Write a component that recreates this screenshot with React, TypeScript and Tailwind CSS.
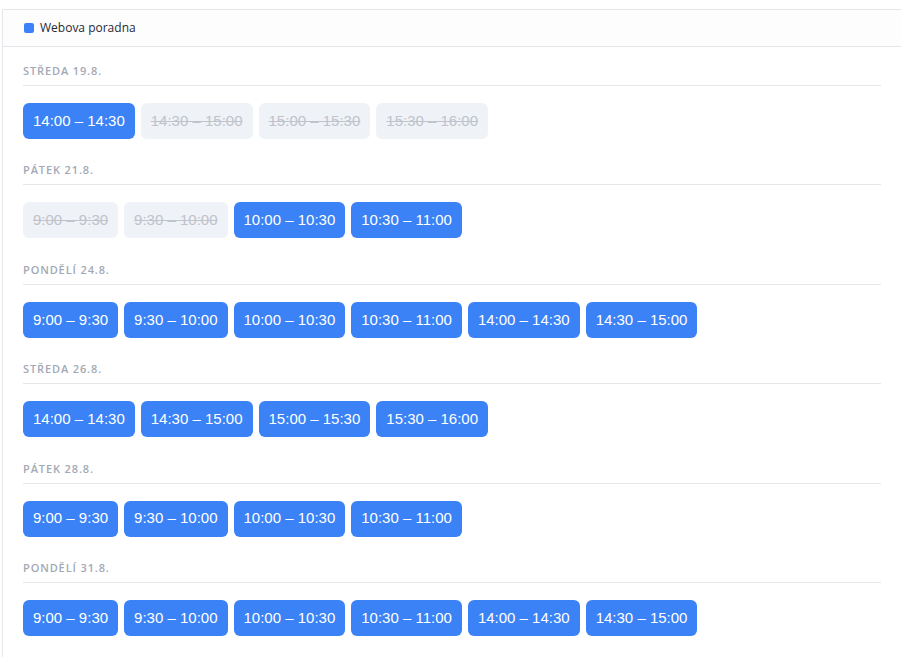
import React from 'react';

type Slot = { label: string; taken?: boolean };
type Day = { title: string; slots: Slot[] };

const days: Day[] = [
  {
    title: 'Středa 19.8.',
    slots: [
      { label: '14:00 – 14:30' },
      { label: '14:30 – 15:00', taken: true },
      { label: '15:00 – 15:30', taken: true },
      { label: '15:30 – 16:00', taken: true },
    ],
  },
  {
    title: 'Pátek 21.8.',
    slots: [
      { label: '9:00 – 9:30', taken: true },
      { label: '9:30 – 10:00', taken: true },
      { label: '10:00 – 10:30' },
      { label: '10:30 – 11:00' },
    ],
  },
  {
    title: 'Pondělí 24.8.',
    slots: [
      { label: '9:00 – 9:30' },
      { label: '9:30 – 10:00' },
      { label: '10:00 – 10:30' },
      { label: '10:30 – 11:00' },
      { label: '14:00 – 14:30' },
      { label: '14:30 – 15:00' },
    ],
  },
  {
    title: 'Středa 26.8.',
    slots: [
      { label: '14:00 – 14:30' },
      { label: '14:30 – 15:00' },
      { label: '15:00 – 15:30' },
      { label: '15:30 – 16:00' },
    ],
  },
  {
    title: 'Pátek 28.8.',
    slots: [
      { label: '9:00 – 9:30' },
      { label: '9:30 – 10:00' },
      { label: '10:00 – 10:30' },
      { label: '10:30 – 11:00' },
    ],
  },
  {
    title: 'Pondělí 31.8.',
    slots: [
      { label: '9:00 – 9:30' },
      { label: '9:30 – 10:00' },
      { label: '10:00 – 10:30' },
      { label: '10:30 – 11:00' },
      { label: '14:00 – 14:30' },
      { label: '14:30 – 15:00' },
    ],
  },
];

const SlotButton: React.FC<{ slot: Slot }> = ({ slot }) =>
  slot.taken ? (
    <button
      disabled
      className="h-9 px-[10px] rounded-md bg-[#eff2f7] text-[#bfc3cb] line-through text-[15px] font-['Liberation_Sans',Arial,sans-serif] cursor-not-allowed"
    >
      {slot.label}
    </button>
  ) : (
    <button className="h-9 px-[10px] rounded-md bg-[#3b82f6] text-white text-[15px] font-['Liberation_Sans',Arial,sans-serif]">
      {slot.label}
    </button>
  );

export default function App() {
  return (
    <div className="min-h-[657px] bg-white pt-[9px] pl-[2px] font-['Open_Sans',sans-serif]">
      <div className="min-h-[648px] border-l border-t border-[#e5e7eb]">
        <div className="h-[37px] flex items-center gap-[6px] px-[21px] border-b border-[#e5e7eb] bg-[#fdfdfd]">
          <span className="w-[10px] h-[10px] rounded-[2px] bg-[#3b82f6]" />
          <span className="text-[12px] text-[#1f2937]">Webova poradna</span>
        </div>

        <div className="px-[20px] pt-[16px]">
          {days.map((day) => (
            <div key={day.title} className="mb-[23.4px]">
              <div className="pb-[6px] border-b border-[#e5e7eb] text-[11px] leading-4 font-semibold uppercase tracking-[0.08em] text-[#a3a9b4]">
                {day.title}
              </div>
              <div className="mt-[17px] flex flex-wrap gap-[6px]">
                {day.slots.map((slot) => (
                  <SlotButton key={slot.label} slot={slot} />
                ))}
              </div>
            </div>
          ))}
        </div>
      </div>
    </div>
  );
}
